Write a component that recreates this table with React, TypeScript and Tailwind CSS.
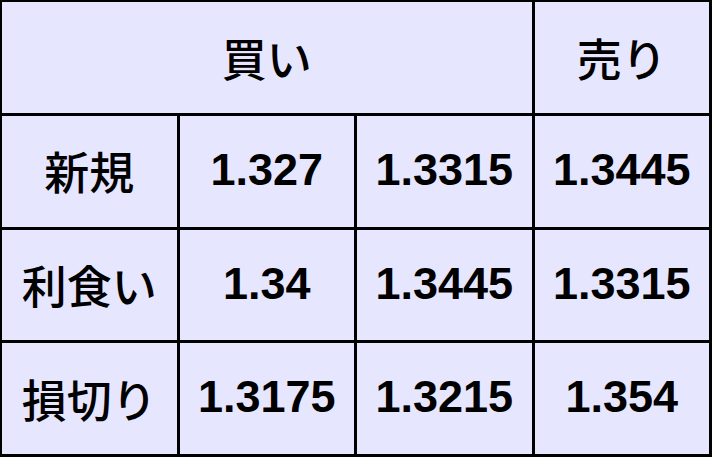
import { Fragment } from "react";

const rows = [
  { label: "新規", values: ["1.327", "1.3315", "1.3445"] },
  { label: "利食い", values: ["1.34", "1.3445", "1.3315"] },
  { label: "損切り", values: ["1.3175", "1.3215", "1.354"] },
];

const cell = "bg-[#e6e6ff] flex items-center justify-center";
const jp = "font-['Noto_Sans_CJK_JP',sans-serif] font-medium text-[45px]";
const num = "font-['Liberation_Sans',Arial,sans-serif] font-bold text-[45px] pb-[3px]";

export default function App() {
  return (
    <div className="w-[712px] h-[457px] bg-black pt-[2px] pl-[2px] pr-[3px] pb-[3px] grid grid-cols-4 grid-rows-4 gap-[3px] text-black">
      <div className={`col-span-3 ${cell} ${jp}`}>買い</div>
      <div className={`${cell} ${jp}`}>売り</div>
      {rows.map((row) => (
        <Fragment key={row.label}>
          <div className={`${cell} ${jp}`}>{row.label}</div>
          {row.values.map((v, i) => (
            <div key={i} className={`${cell} ${num}`}>
              {v}
            </div>
          ))}
        </Fragment>
      ))}
    </div>
  );
}
